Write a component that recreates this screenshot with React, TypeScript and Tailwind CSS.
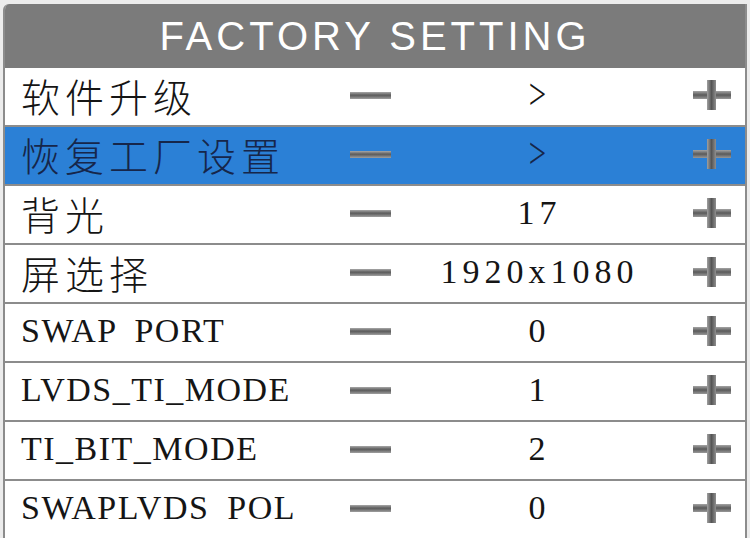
import type { ReactNode } from "react";

// ── data ──────────────────────────────────────────────────────────────────────

type Row = { label: string; value: string; cjk?: boolean; active?: boolean };

const rows: Row[] = [
  { label: "软件升级", value: ">", cjk: true },
  { label: "恢复工厂设置", value: ">", cjk: true, active: true },
  { label: "背光", value: "17", cjk: true },
  { label: "屏选择", value: "1920x1080", cjk: true },
  { label: "SWAP PORT", value: "0" },
  { label: "LVDS_TI_MODE", value: "1" },
  { label: "TI_BIT_MODE", value: "2" },
  { label: "SWAPLVDS POL", value: "0" },
];

// ── icons ─────────────────────────────────────────────────────────────────────

function MinusIcon() {
  return (
    <div className="w-[41px] h-[7px] bg-[linear-gradient(to_bottom,#a8a8a8,#5c5c5c_45%,#6a6a6a_60%,#a0a0a0)]" />
  );
}

function PlusIcon() {
  return (
    <svg width="38" height="30" viewBox="0 0 38 30">
      <defs>
        <linearGradient id="ph" x1="0" y1="0" x2="0" y2="1">
          <stop offset="0" stopColor="#a4a4a4" />
          <stop offset="0.5" stopColor="#5a5a5a" />
          <stop offset="1" stopColor="#989898" />
        </linearGradient>
        <linearGradient id="pv" x1="0" y1="0" x2="1" y2="0">
          <stop offset="0" stopColor="#a0a0a0" />
          <stop offset="0.5" stopColor="#555" />
          <stop offset="1" stopColor="#8e8e8e" />
        </linearGradient>
      </defs>
      <rect x="0" y="11" width="38" height="8" fill="url(#ph)" />
      <rect x="14" y="0" width="9" height="30" fill="url(#pv)" />
    </svg>
  );
}

// ── row ───────────────────────────────────────────────────────────────────────

function SettingRow({ row }: { row: Row }) {
  const text = row.active ? "text-[#16264a]" : "text-[#151515]";
  return (
    <div
      className={`flex items-center h-[59px] border-b-2 border-[#8c8c8c] pb-[3px] ${
        row.active ? "bg-[#2b80d6]" : "bg-white"
      }`}
    >
      <div className={`w-[327px] pl-[16px] leading-none whitespace-pre ${text}`}>
        {row.cjk ? (
          <span className="font-['Noto_Sans_CJK_SC','Noto_Sans',sans-serif] font-light text-[39px] tracking-[5px]">
            {row.label}
          </span>
        ) : (
          <span className="font-['Liberation_Serif',serif] text-[34px] tracking-[1.5px] [word-spacing:8px]">
            {row.label}
          </span>
        )}
      </div>
      <div className="w-[76px] flex justify-center">
        <MinusIcon />
      </div>
      <div className={`w-[258px] flex justify-center ${text}`}>
        {row.value === ">" ? (
          <span className="inline-block font-['Liberation_Serif',serif] text-[44px] leading-none scale-x-[0.7]">
            &gt;
          </span>
        ) : (
          <span className="font-['Liberation_Serif',serif] text-[34px] leading-none tracking-[5px] pl-[5px]">
            {row.value}
          </span>
        )}
      </div>
      <div className="w-[79px] flex justify-end pr-[14px]">
        <PlusIcon />
      </div>
    </div>
  );
}

function Frame({ children }: { children: ReactNode }) {
  return (
    <div className="w-[750px] h-[538px] overflow-hidden bg-[#ececec] pt-[4px] pl-[3px]">
      <div className="w-[744px] border-l-2 border-r-2 border-[#8c8c8c] rounded-tl-[6px] overflow-hidden">
        {children}
      </div>
    </div>
  );
}

export default function App() {
  return (
    <Frame>
      <div className="h-[64px] bg-[#7b7b7b] flex items-center justify-center">
        <span className="font-['Liberation_Sans',Arial,sans-serif] text-[40px] tracking-[4px] text-white leading-none">
          FACTORY SETTING
        </span>
      </div>
      {rows.map(r => (
        <SettingRow key={r.label} row={r} />
      ))}
    </Frame>
  );
}
